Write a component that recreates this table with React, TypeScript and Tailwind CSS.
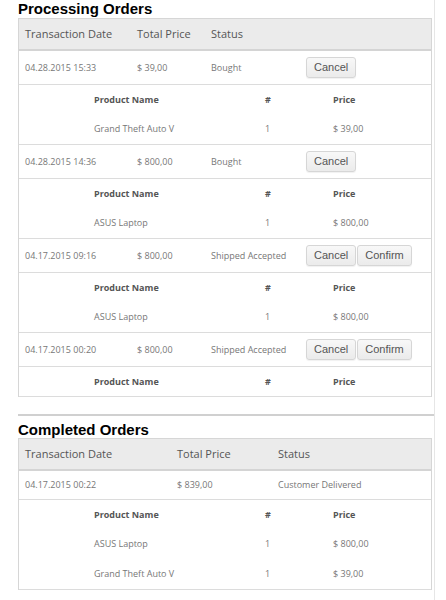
const processing = [
    { date: "04.28.2015 15:33", total: "$ 39,00", status: "Bought", confirm: false, items: [{ name: "Grand Theft Auto V", qty: 1, price: "$ 39,00" }] },
    { date: "04.28.2015 14:36", total: "$ 800,00", status: "Bought", confirm: false, items: [{ name: "ASUS Laptop", qty: 1, price: "$ 800,00" }] },
    { date: "04.17.2015 09:16", total: "$ 800,00", status: "Shipped Accepted", confirm: true, items: [{ name: "ASUS Laptop", qty: 1, price: "$ 800,00" }] },
    { date: "04.17.2015 00:20", total: "$ 800,00", status: "Shipped Accepted", confirm: true, items: [] },
]

const completed = [
    {
        date: "04.17.2015 00:22", total: "$ 839,00", status: "Customer Delivered",
        items: [
            { name: "ASUS Laptop", qty: 1, price: "$ 800,00" },
            { name: "Grand Theft Auto V", qty: 1, price: "$ 39,00" },
        ],
    },
]

function Btn({ label }: { label: string }) {
    return (
        <button className="h-[21px] px-[7px] rounded-[3px] border border-[#d6d6d6] bg-gradient-to-b from-[#f8f8f8] to-[#ebebeb] font-['Liberation_Sans',Arial,sans-serif] text-[11px] text-[#555] leading-none shadow-[0_1px_1px_rgba(0,0,0,0.06)]">
            {label}
        </button>
    )
}

function Products({ items }: { items: { name: string; qty: number; price: string }[] }) {
    return (
        <div className="border-b border-[#dcdcdc] text-[9px] text-[#777]">
            <div className="grid grid-cols-[75px_171px_68px_1fr] h-[29px] items-center font-bold text-[#555]">
                <span />
                <span>Product Name</span>
                <span>#</span>
                <span>Price</span>
            </div>
            {items.map((it) => (
                <div key={it.name} className="grid grid-cols-[75px_171px_68px_1fr] h-[30px] items-center">
                    <span />
                    <span className="text-[#777]">{it.name}</span>
                    <span className="text-[#777]">{it.qty}</span>
                    <span className="text-[#777]">{it.price}</span>
                </div>
            ))}
        </div>
    )
}

export default function App() {
    return (
        <main className="w-[435px] min-h-[600px] border-r border-[#e6e6e6] bg-white font-['Open_Sans',sans-serif]">
            <h1 className="pl-[18px] h-[18px] font-['Liberation_Sans',Arial,sans-serif] font-bold text-[15px] leading-[18px] text-black">Processing Orders</h1>
            <section className="ml-[18px] w-[414px] border border-[#d6d6d6] border-b-0">
                <div className="grid grid-cols-[112px_74px_95px_1fr] h-[32px] items-center bg-[#ebebeb] border-b-2 border-[#d4d4d4] text-[11px] text-[#555]">
                    <span className="pl-[6px]">Transaction Date</span>
                    <span className="pl-[6px]">Total Price</span>
                    <span className="pl-[6px]">Status</span>
                    <span />
                </div>
                {processing.map((o) => (
                    <div key={o.date}>
                        <div className="grid grid-cols-[112px_74px_95px_1fr] h-[34px] items-center border-b border-[#dcdcdc] text-[9px] text-[#777]">
                            <span className="pl-[6px]">{o.date}</span>
                            <span className="pl-[6px]">{o.total}</span>
                            <span className="pl-[6px]">{o.status}</span>
                            <span className="pl-[6px] flex gap-[1px]">
                                <Btn label="Cancel" />
                                {o.confirm && <Btn label="Confirm" />}
                            </span>
                        </div>
                        <Products items={o.items} />
                    </div>
                ))}
            </section>
            <hr className="ml-[18px] mt-[17px] w-[416px] border-0 border-t-2 border-[#d0d0d0]" />
            <h1 className="pl-[18px] pt-[5px] h-[22px] font-['Liberation_Sans',Arial,sans-serif] font-bold text-[15px] leading-[18px] text-black">Completed Orders</h1>
            <section className="ml-[18px] w-[414px] border border-[#d6d6d6] border-b-0">
                <div className="grid grid-cols-[152px_101px_1fr] h-[32px] items-center bg-[#ebebeb] border-b-2 border-[#d4d4d4] text-[11px] text-[#555]">
                    <span className="pl-[6px]">Transaction Date</span>
                    <span className="pl-[6px]">Total Price</span>
                    <span className="pl-[6px]">Status</span>
                </div>
                {completed.map((o) => (
                    <div key={o.date}>
                        <div className="grid grid-cols-[152px_101px_1fr] h-[29px] items-center border-b border-[#dcdcdc] text-[9px] text-[#777]">
                            <span className="pl-[6px]">{o.date}</span>
                            <span className="pl-[6px]">{o.total}</span>
                            <span className="pl-[6px]">{o.status}</span>
                        </div>
                        <Products items={o.items} />
                    </div>
                ))}
            </section>
        </main>
    )
}
